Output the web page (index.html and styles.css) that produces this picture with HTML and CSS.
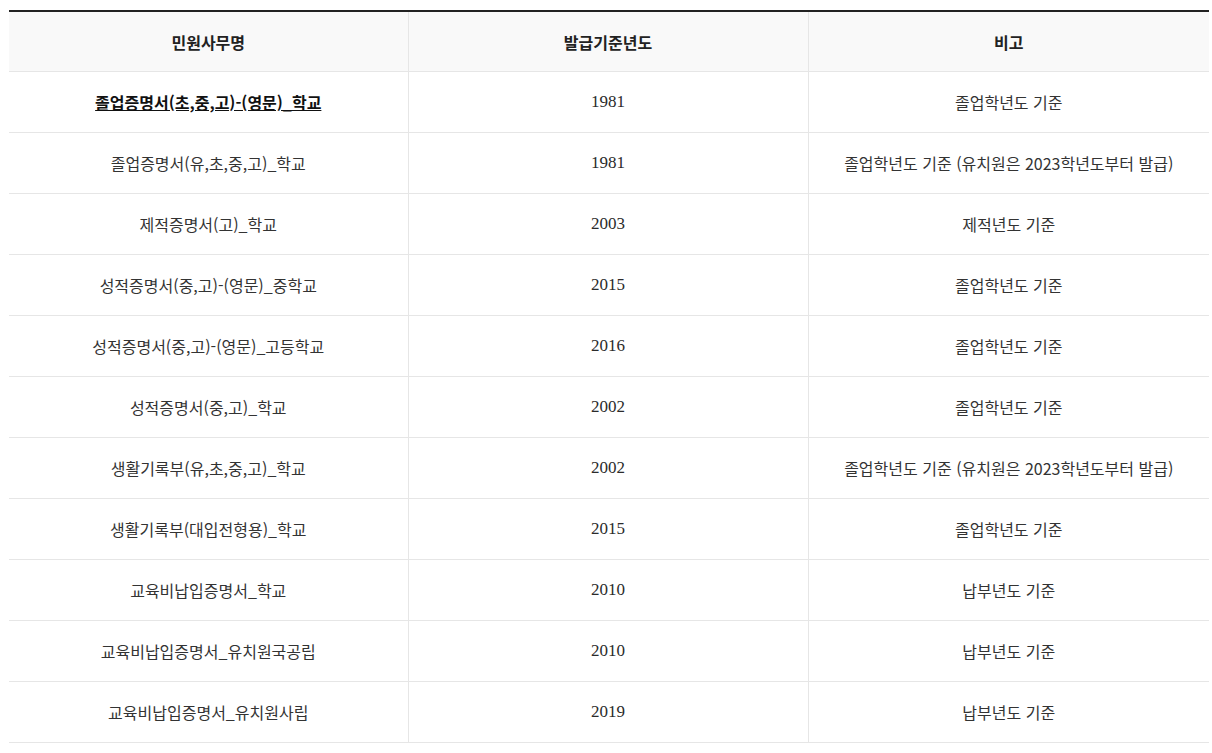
FILE: index.html
```html
<!DOCTYPE html>
<html lang="ko">
<head>
<meta charset="utf-8">
<title>민원사무 발급기준</title>
<link rel="stylesheet" href="styles.css">
</head>
<body>
<table class="tbl">
  <colgroup>
    <col class="c1"><col class="c2"><col class="c3">
  </colgroup>
  <thead>
    <tr><th>민원사무명</th><th>발급기준년도</th><th>비고</th></tr>
  </thead>
  <tbody>
    <tr><td><a class="lnk" href="#">졸업증명서(초,중,고)-(영문)_학교</a></td><td class="num">1981</td><td>졸업학년도 기준</td></tr>
    <tr><td>졸업증명서(유,초,중,고)_학교</td><td class="num">1981</td><td>졸업학년도 기준 (유치원은 2023학년도부터 발급)</td></tr>
    <tr><td>제적증명서(고)_학교</td><td class="num">2003</td><td>제적년도 기준</td></tr>
    <tr><td>성적증명서(중,고)-(영문)_중학교</td><td class="num">2015</td><td>졸업학년도 기준</td></tr>
    <tr><td>성적증명서(중,고)-(영문)_고등학교</td><td class="num">2016</td><td>졸업학년도 기준</td></tr>
    <tr><td>성적증명서(중,고)_학교</td><td class="num">2002</td><td>졸업학년도 기준</td></tr>
    <tr><td>생활기록부(유,초,중,고)_학교</td><td class="num">2002</td><td>졸업학년도 기준 (유치원은 2023학년도부터 발급)</td></tr>
    <tr><td>생활기록부(대입전형용)_학교</td><td class="num">2015</td><td>졸업학년도 기준</td></tr>
    <tr><td>교육비납입증명서_학교</td><td class="num">2010</td><td>납부년도 기준</td></tr>
    <tr><td>교육비납입증명서_유치원국공립</td><td class="num">2010</td><td>납부년도 기준</td></tr>
    <tr><td>교육비납입증명서_유치원사립</td><td class="num">2019</td><td>납부년도 기준</td></tr>
  </tbody>
</table>
</body>
</html>
```
FILE: styles.css
```css
html, body {
  margin: 0;
  padding: 0;
  background: #fff;
}
body {
  padding: 10px 3px 0 9px;
  font-family: "Noto Sans CJK KR", "Noto Sans", sans-serif;
  color: #333;
}
.tbl {
  width: 1200px;
  border-collapse: collapse;
  table-layout: fixed;
  border-top: 2px solid #222;
}
.c1 { width: 399px; }
.c2 { width: 400px; }
.c3 { width: 401px; }
.tbl th {
  height: 59px;
  padding: 0;
  background: #f9f9f9;
  font-size: 16px;
  font-weight: 700;
  color: #222;
  text-align: center;
  vertical-align: middle;
  border-bottom: 1px solid #e6e6e6;
  border-left: 1px solid #e6e6e6;
}
.tbl td {
  height: 60px;
  padding: 0;
  font-size: 16px;
  text-align: center;
  vertical-align: middle;
  border-bottom: 1px solid #e6e6e6;
  border-left: 1px solid #e6e6e6;
}
.tbl th:first-child, .tbl td:first-child { border-left: none; }
.tbl td.num {
  font-family: "Liberation Serif", "Noto Sans CJK KR", serif;
  font-size: 17px;
  color: #2b2b2b;
}
.lnk {
  color: #111;
  font-weight: 700;
  text-decoration: underline;
}
```
